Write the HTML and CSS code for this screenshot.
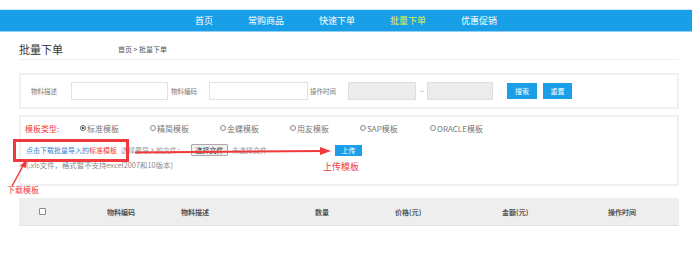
FILE: index.html
```html
<!DOCTYPE html>
<html lang="zh-CN">
  <head>
    <meta charset="UTF-8" />
    <title>批量下单</title>
    <link rel="stylesheet" href="styles.css">
  </head>
  <body>
    <div class="nav">
      <a class="nav-item">首页</a>
      <a class="nav-item">常购商品</a>
      <a class="nav-item">快速下单</a>
      <a class="nav-item active">批量下单</a>
      <a class="nav-item">优惠促销</a>
    </div>

    <div class="main">
      <div class="page-head">
        <h1 class="page-title">批量下单</h1>
        <div class="crumb">首页 &gt; 批量下单</div>
      </div>

      <div class="search-box">
        <span class="s-label">物料描述</span>
        <input class="s-input in-desc" type="text" />
        <span class="s-label lb-code">物料编码</span>
        <input class="s-input in-code" type="text" />
        <span class="s-label lb-time">操作时间</span>
        <input class="s-input s-date" type="text" />
        <span class="tilde">~</span>
        <input class="s-input s-date s-date-end" type="text" />
        <button class="btn btn-search">搜索</button>
        <button class="btn btn-reset">重置</button>
      </div>

      <div class="tpl-box">
        <div class="tpl-row">
          <span class="tpl-label">模板类型:</span>
          <label class="radio checked"><i></i>标准模板</label>
          <label class="radio"><i></i>精简模板</label>
          <label class="radio"><i></i>金蝶模板</label>
          <label class="radio"><i></i>用友模板</label>
          <label class="radio"><i></i>SAP模板</label>
          <label class="radio"><i></i>ORACLE模板</label>
        </div>
        <div class="upload-row">
          <a class="dl-link">点击下载批量导入的<em>标准模板</em></a>
          <span class="hint">选择要导入的文件：</span>
          <span class="file-btn">选择文件</span>
          <span class="hint">未选择文件</span>
          <button class="btn btn-upload">上传</button>
        </div>
        <div class="note">(.xls文件，格式暂不支持excel2007和10版本)</div>
      </div>

      <div class="table-head">
        <span class="th th-check"><i class="checkbox"></i></span>
        <span class="th th-code">物料编码</span>
        <span class="th th-desc">物料描述</span>
        <span class="th th-qty">数量</span>
        <span class="th th-price">价格(元)</span>
        <span class="th th-amount">金额(元)</span>
        <span class="th th-time">操作时间</span>
      </div>
    </div>

    <!-- annotations drawn over the screenshot -->
    <div class="mark-box"></div>
    <span class="mark-text mark-download">下载模板</span>
    <span class="mark-text mark-upload">上传模板</span>
    <svg class="mark-arrows" width="692" height="279" viewBox="0 0 692 279">
      <line x1="135" y1="152.5" x2="322" y2="151" stroke="#f0393d" stroke-width="2" />
      <polygon points="331,151 320,147 320,155" fill="#f0393d" />
      <line x1="12" y1="186" x2="23" y2="166" stroke="#f0393d" stroke-width="1.5" />
      <polygon points="27,159 20,166 26,168" fill="#f0393d" />
    </svg>
  </body>
</html>
```

FILE: styles.css
```css
body {
  margin: 0;
  padding: 0;
  font-family: "Noto Sans CJK SC", "Noto Sans", sans-serif;
  background-color: #fff;
  color: #666;
  position: relative;
  height: 279px;
  overflow: hidden;
}

.nav {
  margin-top: 9px;
  height: 21px;
  background-color: #189fe7;
  border-top: 1px solid #d2e9f5;
  border-bottom: 1px solid #8fd0f4;
  display: flex;
  justify-content: center;
  align-items: center;
  gap: 35px;
}

.nav-item {
  color: #fff;
  font-size: 9px;
  line-height: 21px;
}

.nav-item.active {
  color: #e3f53c;
}

.main {
  margin: 0 13px 0 19px;
}

.page-head {
  display: flex;
  align-items: center;
  height: 20px;
  padding-top: 7px;
  border-bottom: 1px solid #f0f0f0;
}

.page-title {
  margin: 0;
  font-size: 11px;
  font-weight: normal;
  color: #333;
  width: 99px;
}

.crumb {
  font-size: 7px;
  color: #555;
}

.search-box {
  margin-top: 13px;
  height: 32px;
  border: 2px solid #efefef;
  display: flex;
  align-items: center;
  padding-left: 10px;
}

.s-label {
  font-size: 6.5px;
  color: #777;
}

.s-input {
  box-sizing: border-box;
  height: 18px;
  border: 1px solid #e2e2e2;
  background: #fff;
  margin: 0;
  padding: 0;
}

.in-desc {
  width: 97px;
  margin-left: 14px;
}

.lb-code {
  margin-left: 3px;
}

.in-code {
  width: 99px;
  margin-left: 12px;
}

.lb-time {
  margin-left: 2px;
}

.s-date {
  width: 68px;
  margin-left: 12px;
  background: #ececec;
  border-color: #dedede;
}

.s-date-end {
  width: 66px;
  margin-left: 3px;
}

.tilde {
  font-size: 7px;
  color: #999;
  margin-left: 4px;
}

.btn {
  border: none;
  background-color: #1a9fe8;
  color: #fff;
  font-family: inherit;
  font-size: 7px;
  padding: 0;
  cursor: pointer;
}

.btn-search {
  width: 30px;
  height: 16px;
  margin-left: 14px;
}

.btn-reset {
  width: 29px;
  height: 16px;
  margin-left: 6px;
}

.tpl-box {
  margin-top: 6px;
  height: 67px;
  border: 2px solid #efefef;
  padding-left: 4px;
}

.tpl-row {
  display: flex;
  align-items: center;
  height: 14px;
  margin-top: 4px;
}

.tpl-label {
  color: #f0393d;
  font-size: 8px;
  width: 55px;
}

.radio {
  display: flex;
  align-items: center;
  width: 70px;
  font-size: 8px;
  color: #777;
  white-space: nowrap;
}

.radio i {
  box-sizing: border-box;
  width: 6px;
  height: 6px;
  border: 1px solid #888;
  border-radius: 50%;
  margin-right: 1px;
}

.radio.checked i {
  border-color: #666;
  background: radial-gradient(circle, #555 1.2px, #fff 1.6px);
}

.upload-row {
  display: flex;
  align-items: center;
  height: 14px;
  margin-top: 8px;
  padding-left: 1px;
  font-size: 7px;
}

.dl-link {
  color: #2d86d8;
}

.dl-link em {
  font-style: normal;
  color: #f0393d;
}

.hint {
  color: #999;
  margin-left: 4px;
}

.file-btn {
  box-sizing: border-box;
  margin-left: 7px;
  width: 37px;
  height: 12px;
  line-height: 10px;
  text-align: center;
  border: 1px solid #aaa;
  border-radius: 1px;
  background: #efefef;
  color: #333;
}

.btn-upload {
  width: 27px;
  height: 11px;
  margin-left: 68px;
}

.note {
  margin-top: 3px;
  padding-left: 1px;
  font-size: 7.4px;
  color: #8a8a8a;
  height: 10px;
  line-height: 10px;
}

.table-head {
  margin-top: 12px;
  height: 27px;
  background-color: #eeeeee;
  border-bottom: 1px solid #e3e3e3;
  display: grid;
  grid-template-columns: 88px 74px 134px 80px 107px 106px 1fr;
  align-items: center;
  font-size: 7px;
  font-weight: bold;
  color: #555;
}

.th-check {
  padding-left: 20px;
  display: flex;
}

.checkbox {
  box-sizing: border-box;
  width: 7px;
  height: 7px;
  border: 1px solid #888;
  background: #fff;
  border-radius: 1px;
}

.mark-box {
  position: absolute;
  left: 13px;
  top: 139px;
  width: 110px;
  height: 17px;
  border: 3px solid #f0393d;
}

.mark-text {
  position: absolute;
  color: #f0393d;
  white-space: nowrap;
}

.mark-download {
  left: 7px;
  top: 184px;
  font-size: 8px;
}

.mark-upload {
  left: 323px;
  top: 160px;
  font-size: 9px;
}

.mark-arrows {
  position: absolute;
  left: 0;
  top: 0;
  pointer-events: none;
}
```
